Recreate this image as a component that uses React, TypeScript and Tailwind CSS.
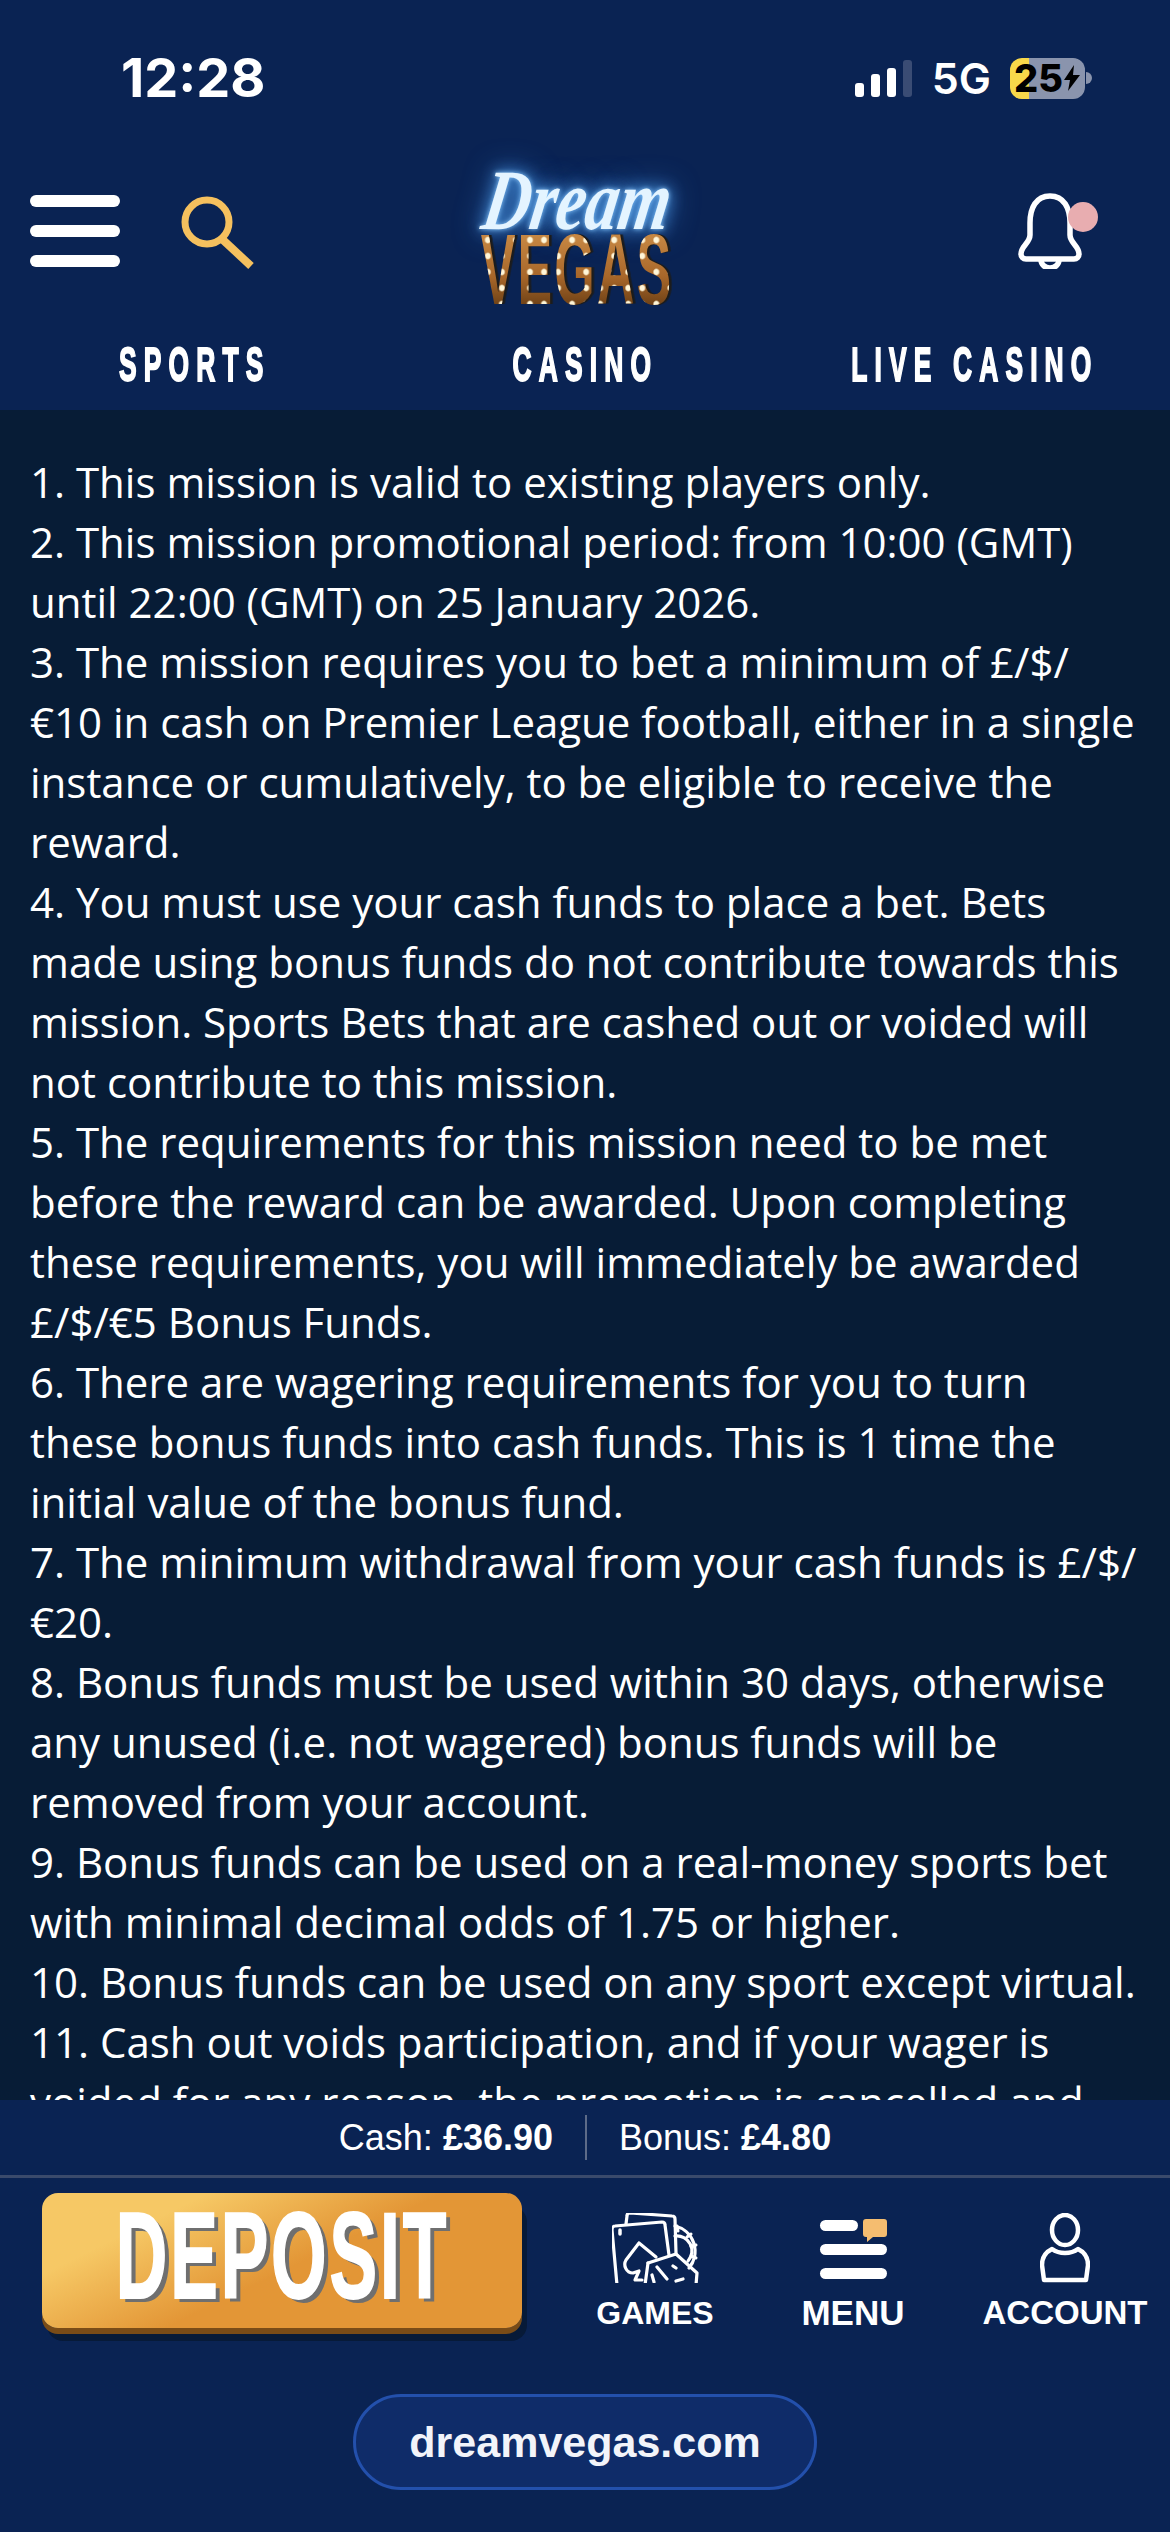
import React from 'react';

const terms = [
  '1. This mission is valid to existing players only.',
  '2. This mission promotional period: from 10:00 (GMT) until 22:00 (GMT) on 25 January 2026.',
  '3. The mission requires you to bet a minimum of £/$/€10 in cash on Premier League football, either in a single instance or cumulatively, to be eligible to receive the reward.',
  '4. You must use your cash funds to place a bet. Bets made using bonus funds do not contribute towards this mission. Sports Bets that are cashed out or voided will not contribute to this mission.',
  '5. The requirements for this mission need to be met before the reward can be awarded. Upon completing these requirements, you will immediately be awarded £/$/€5 Bonus Funds.',
  '6. There are wagering requirements for you to turn these bonus funds into cash funds. This is 1 time the initial value of the bonus fund.',
  '7. The minimum withdrawal from your cash funds is £/$/€20.',
  '8. Bonus funds must be used within 30 days, otherwise any unused (i.e. not wagered) bonus funds will be removed from your account.',
  '9. Bonus funds can be used on a real-money sports bet with minimal decimal odds of 1.75 or higher.',
  '10. Bonus funds can be used on any sport except virtual.',
  '11. Cash out voids participation, and if your wager is voided for any reason, the promotion is cancelled and no reward will be given.',
];

function StatusBar() {
  return (
    <div className="flex h-[156px] items-center justify-between pl-[121px] pr-[78px] text-white font-['Inter',sans-serif]">
      <span className="text-[54px] font-bold leading-none">12:28</span>
      <div className="flex items-center">
        <div className="flex h-[37px] items-end gap-[7px]">
          <div className="h-[14px] w-[9px] rounded-[3px] bg-white" />
          <div className="h-[23px] w-[9px] rounded-[3px] bg-white" />
          <div className="h-[29px] w-[9px] rounded-[3px] bg-white" />
          <div className="h-[37px] w-[9px] rounded-[3px] bg-[#3a4c74]" />
        </div>
        <span className="ml-[20px] text-[43px] font-semibold leading-none">5G</span>
        <div className="ml-[19px] flex h-[41px] w-[75px] items-center justify-center rounded-[12px] bg-[linear-gradient(to_right,#f8d84a_25%,#8a94ad_25%)] text-black">
          <span className="text-[38px] font-extrabold leading-none">25</span>
          <svg width="18" height="26" viewBox="0 0 18 26" className="shrink-0">
            <path d="M11 0 1 15h6l-2 11L17 10h-7z" fill="#000" />
          </svg>
        </div>
        <div className="ml-[1px] h-[12px] w-[6px] rounded-r-full bg-[#8a94ad]" />
      </div>
    </div>
  );
}

function Logo() {
  return (
    <div className="flex w-[200px] translate-y-[8px] flex-col items-center overflow-visible">
      <span className="h-[60px] -skew-x-12 scale-y-[1.3] whitespace-nowrap font-['Liberation_Serif',serif] text-[66px] font-bold italic leading-[58px] text-[#e4f4ff] [text-shadow:0_0_5px_#8ccaff,0_0_14px_#4f9fee,0_0_26px_#3a7fd0]">
        Dream
      </span>
      <span className="h-[74px] shrink-0 scale-x-[0.52] whitespace-nowrap bg-[radial-gradient(ellipse_7px_4px_at_center,#fff6d8_60%,transparent_100%),linear-gradient(to_bottom,#c98a45,#a8672a_60%,#6e4116)] bg-[length:27px_16px,100%_100%] bg-clip-text font-['Liberation_Sans',sans-serif] text-[100px] font-bold leading-[74px] tracking-[4px] text-transparent drop-shadow-[5px_0_0_#1c1c1c]">
        VEGAS
      </span>
    </div>
  );
}

function MainRow() {
  return (
    <div className="grid h-[150px] grid-cols-[1fr_auto_1fr] items-center pl-[30px] pr-[46px]">
      <div className="flex items-center">
        <div className="flex w-[90px] flex-col gap-[18px]">
          <div className="h-[12px] rounded-full bg-white" />
          <div className="h-[12px] rounded-full bg-white" />
          <div className="h-[12px] rounded-full bg-white" />
        </div>
        <svg width="74" height="74" viewBox="0 0 74 74" className="ml-[61px] translate-y-[2px]" fill="none" stroke="#f5c05e">
          <circle cx="26" cy="26" r="22" strokeWidth="7" />
          <path d="M41 43 70 70" strokeWidth="8" />
        </svg>
      </div>
      <Logo />
      <div className="flex justify-end pr-[26px]">
        <svg width="80" height="76" viewBox="0 0 80 76" fill="none" stroke="#fff" strokeWidth="5.5">
          <path d="M32 3C18 3 12 15 12 30v12c0 8-9 11-9 19 0 3 2 5 5 5h48c3 0 5-2 5-5 0-8-9-11-9-19V30C52 15 46 3 32 3Z" />
          <path d="M23 67a9 8 0 0 0 18 0" />
          <circle cx="65" cy="24" r="15" fill="#e8adb0" stroke="none" />
        </svg>
      </div>
    </div>
  );
}

function Tab({ label }: { label: string }) {
  return (
    <div className="flex justify-center">
      <span className="shrink-0 scale-x-[0.55] whitespace-nowrap font-['Liberation_Sans',sans-serif] text-[48px] font-bold leading-none tracking-[13px] text-white [-webkit-text-stroke:2px_#fff]">
        {label}
      </span>
    </div>
  );
}

function GamesIcon() {
  return (
    <svg width="87" height="70" viewBox="0 0 87 70" fill="none" stroke="#fff" strokeWidth="3.2" strokeLinejoin="round" strokeLinecap="round">
      <path d="M14 11 15 3c0-2 1-3 3-3l42 3c2 0 3 1 3 3l1 34" />
      <path d="M5 72 0 17c0-2 1-4 3-4l47-4c2 0 3 1 3 3l4 30" />
      <path d="M8 17v4" strokeWidth="3.5" />
      <path d="M27 30 44 44M27 30 14 47c-3 5 0 13 7 13l6-2-4 9h7" />
      <path d="M63 13a26 26 0 0 1 14 42" />
      <path d="M63 23a15 15 0 0 1 13 25" />
      <path d="M66 18 65 13M75 24l4-3M79 33l5-1M79 43l5 2" strokeWidth="3" />
      <path d="M36 50 64 41l21 19-1 12" />
      <path d="M36 50 33 72" />
      <path d="M61 53 64 55M40 62 42 69M45 54 55 66M64 68 71 66" strokeWidth="3.2" />
    </svg>
  );
}

function MenuIcon() {
  return (
    <div className="relative flex h-[70px] w-[67px] flex-col gap-[13px] pt-[7px]">
      <div className="h-[11px] w-[38px] rounded-full bg-white" />
      <div className="h-[11px] w-[67px] rounded-full bg-white" />
      <div className="h-[11px] w-[67px] rounded-full bg-white" />
      <svg width="24" height="24" viewBox="0 0 24 24" className="absolute right-0 top-[6px]">
        <path d="M3 0h18a3 3 0 0 1 3 3v12a3 3 0 0 1-3 3H10l-6 5v-5H3a3 3 0 0 1-3-3V3a3 3 0 0 1 3-3Z" fill="#f5bd70" />
      </svg>
    </div>
  );
}

function AccountIcon() {
  return (
    <svg width="50" height="70" viewBox="0 0 50 70" fill="none" stroke="#fff" strokeWidth="4.5" strokeLinejoin="round">
      <ellipse cx="25" cy="17" rx="13" ry="15" />
      <path d="M12 36c-6 3-10 8-10 16l2 15h42l2-15c0-8-4-13-10-16-4 3-8 4-13 4s-9-1-13-4Z" />
    </svg>
  );
}

function NavItem({ label, width, icon, size }: { label: string; width: string; icon: React.ReactNode; size: string }) {
  return (
    <div className={`flex flex-col items-center ${width}`}>
      <div className="flex h-[70px] items-end">{icon}</div>
      <span className={`mt-[13px] font-['Liberation_Sans',sans-serif] font-bold leading-[34px] text-white ${size}`}>{label}</span>
    </div>
  );
}

export default function App() {
  return (
    <div className="flex h-[2532px] w-[1170px] flex-col overflow-hidden bg-[#0a2353]">
      <header className="shrink-0">
        <StatusBar />
        <MainRow />
        <div className="grid h-[104px] grid-cols-3 items-center pt-[14px]">
          <Tab label="SPORTS" />
          <Tab label="CASINO" />
          <Tab label="LIVE CASINO" />
        </div>
      </header>

      <main className="min-h-0 flex-1 overflow-hidden bg-[#071c36] px-[30px] pt-[42px] font-['Open_Sans',sans-serif] text-[42px] leading-[60px] text-white">
        {terms.map((t) => (
          <p key={t}>{t}</p>
        ))}
      </main>

      <footer className="h-[432px] shrink-0">
        <div className="flex h-[78px] items-center justify-center border-b-[3px] border-[#3a4a6b] font-['Liberation_Sans',sans-serif] text-[36px] text-white">
          <span>
            Cash: <b>£36.90</b>
          </span>
          <div className="mx-[32px] h-[45px] w-[2px] bg-[#5d6b88]" />
          <span>
            Bonus: <b>£4.80</b>
          </span>
        </div>

        <div className="flex pl-[42px] pt-[15px]">
          <div className="flex h-[135px] w-[480px] shrink-0 items-center justify-center rounded-[16px] bg-[linear-gradient(154deg,#f6c865_22%,#e39636_53%)] pb-[10px] shadow-[0_6px_0_#7a4c17,5px_13px_0_#071a38]">
            <span className="shrink-0 scale-x-[0.58] whitespace-nowrap font-['Liberation_Sans',sans-serif] text-[123px] font-bold leading-none tracking-[5px] text-white [-webkit-text-stroke:2px_#fff] [text-shadow:8px_4px_0_#6f6f6f]">
              DEPOSIT
            </span>
          </div>
          <div className="ml-[34px] flex pt-[20px]">
            <NavItem label="GAMES" width="w-[198px]" size="text-[32px]" icon={<GamesIcon />} />
            <NavItem label="MENU" width="w-[198px]" size="text-[35px]" icon={<MenuIcon />} />
            <NavItem label="ACCOUNT" width="w-[226px]" size="text-[33px]" icon={<AccountIcon />} />
          </div>
        </div>

        <div className="mt-[64px] flex justify-center">
          <div className="flex h-[96px] w-[464px] items-center justify-center rounded-[48px] border-[3px] border-[#2350ac] bg-[#0f2c69] font-['Liberation_Sans',sans-serif] text-[43px] font-bold text-[#f2f4fa]">
            dreamvegas.com
          </div>
        </div>
      </footer>
    </div>
  );
}
